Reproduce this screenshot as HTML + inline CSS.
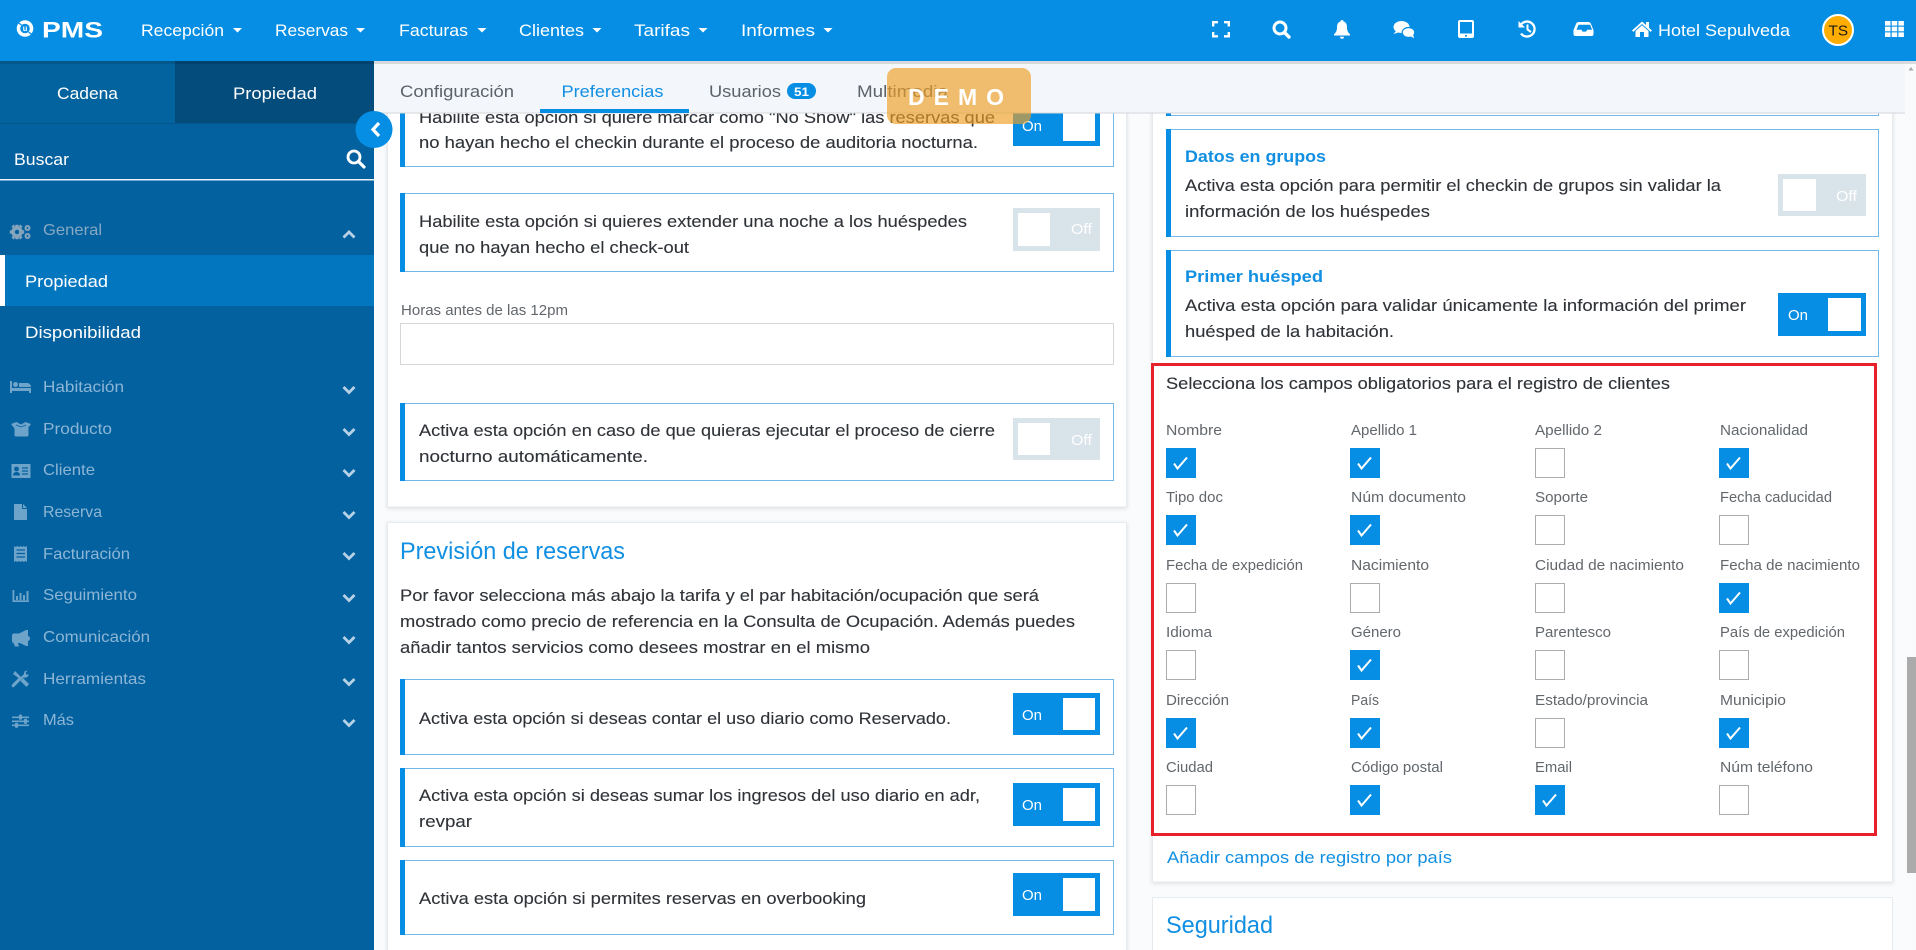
<!DOCTYPE html>
<html lang="es">
<head>
<meta charset="utf-8">
<title>PMS - Preferencias</title>
<style>
html,body{margin:0;padding:0;width:1916px;height:950px;overflow:hidden;background:#f9fbfd}
svg{display:block;position:absolute;left:0;top:0}
text{font-family:"Liberation Sans",sans-serif;white-space:pre}
.m{font-size:17px;fill:#fff}
.b{font-size:17px;fill:#2f3338;stroke:#2f3338;stroke-width:.12}
.l{font-size:14.5px;fill:#62676c}
.s{font-size:16px;fill:#8db6d6}
.h{font-size:24px;fill:#118fe2}
.t{font-size:17px;fill:#5c6268}
.o{font-size:14.5px;fill:#fff}
.bt{font-size:17px;font-weight:bold;fill:#118fe2}
</style>
</head>
<body>
<svg width="1916" height="950" viewBox="0 0 1916 950" xmlns="http://www.w3.org/2000/svg">
<defs>
<g id="cy"><rect width="30" height="30" fill="#058ee3"/><path d="M8 15.5L11.5 20.5L21 9.5" fill="none" stroke="#fff" stroke-width="2"/></g>
<g id="cn"><rect x=".5" y=".5" width="29" height="29" fill="#fff" stroke="#a9adb0"/></g>
<filter id="sh" x="-2%" y="-2%" width="104%" height="104%"><feDropShadow dx="0" dy="1" stdDeviation="2" flood-color="#000" flood-opacity=".12"/></filter>
</defs>

<!-- main background -->
<rect x="374" y="61" width="1542" height="889" fill="#f9fbfd"/>

<!-- left card 1 -->
<rect x="387.5" y="60" width="739" height="447" fill="#fff" stroke="#e6ebef" filter="url(#sh)"/>
<rect x="400.5" y="80.5" width="713" height="86" fill="#fff" stroke="#74b9ea"/><rect x="400" y="80" width="5" height="87" fill="#058ee3"/>
<text class="b" x="419" y="123" textLength="576" lengthAdjust="spacingAndGlyphs">Habilite esta opción si quiere marcar como "No Show" las reservas que</text>
<text class="b" x="419" y="148" textLength="559" lengthAdjust="spacingAndGlyphs">no hayan hecho el checkin durante el proceso de auditoria nocturna.</text>
<rect x="1013" y="100" width="87" height="46" fill="#058ee3"/><rect x="1063" y="100" width="32" height="41" fill="#fff"/>
<text class="o" x="1022" y="131" textLength="20" lengthAdjust="spacingAndGlyphs">On</text>

<rect x="400.5" y="193.5" width="713" height="78" fill="#fff" stroke="#74b9ea"/><rect x="400" y="193" width="5" height="79" fill="#058ee3"/>
<text class="b" x="419" y="227" textLength="548" lengthAdjust="spacingAndGlyphs">Habilite esta opción si quieres extender una noche a los huéspedes</text>
<text class="b" x="419" y="253" textLength="270" lengthAdjust="spacingAndGlyphs">que no hayan hecho el check-out</text>
<rect x="1013" y="208" width="87" height="43" fill="#d9e3ea"/><rect x="1018" y="213" width="32" height="33" fill="#fff"/>
<text class="o" x="1071" y="234" textLength="21" lengthAdjust="spacingAndGlyphs">Off</text>

<text class="l" x="401" y="315" textLength="167" lengthAdjust="spacingAndGlyphs">Horas antes de las 12pm</text>
<rect x="400.5" y="323.5" width="713" height="41" fill="#fff" stroke="#d5d8db"/>

<rect x="400.5" y="403.5" width="713" height="77" fill="#fff" stroke="#74b9ea"/><rect x="400" y="403" width="5" height="78" fill="#058ee3"/>
<text class="b" x="419" y="436" textLength="576" lengthAdjust="spacingAndGlyphs">Activa esta opción en caso de que quieras ejecutar el proceso de cierre</text>
<text class="b" x="419" y="462" textLength="229" lengthAdjust="spacingAndGlyphs">nocturno automáticamente.</text>
<rect x="1013" y="418" width="87" height="42" fill="#d9e3ea"/><rect x="1018" y="423" width="32" height="32" fill="#fff"/>
<text class="o" x="1071" y="445" textLength="21" lengthAdjust="spacingAndGlyphs">Off</text>

<!-- left card 2 -->
<rect x="387.5" y="522.5" width="739" height="440" fill="#fff" stroke="#e6ebef" filter="url(#sh)"/>
<text class="h" x="400" y="559" textLength="225" lengthAdjust="spacingAndGlyphs">Previsión de reservas</text>
<text class="b" x="400" y="601" textLength="639" lengthAdjust="spacingAndGlyphs">Por favor selecciona más abajo la tarifa y el par habitación/ocupación que será</text>
<text class="b" x="400" y="627" textLength="675" lengthAdjust="spacingAndGlyphs">mostrado como precio de referencia en la Consulta de Ocupación. Además puedes</text>
<text class="b" x="400" y="653" textLength="470" lengthAdjust="spacingAndGlyphs">añadir tantos servicios como desees mostrar en el mismo</text>

<rect x="400.5" y="679.5" width="713" height="75" fill="#fff" stroke="#74b9ea"/><rect x="400" y="679" width="5" height="76" fill="#058ee3"/>
<text class="b" x="419" y="724" textLength="532" lengthAdjust="spacingAndGlyphs">Activa esta opción si deseas contar el uso diario como Reservado.</text>
<rect x="1013" y="693" width="87" height="42" fill="#058ee3"/><rect x="1063" y="698" width="32" height="32" fill="#fff"/>
<text class="o" x="1022" y="720" textLength="20" lengthAdjust="spacingAndGlyphs">On</text>

<rect x="400.5" y="768.5" width="713" height="78" fill="#fff" stroke="#74b9ea"/><rect x="400" y="768" width="5" height="79" fill="#058ee3"/>
<text class="b" x="419" y="801" textLength="561" lengthAdjust="spacingAndGlyphs">Activa esta opción si deseas sumar los ingresos del uso diario en adr,</text>
<text class="b" x="419" y="827" textLength="53" lengthAdjust="spacingAndGlyphs">revpar</text>
<rect x="1013" y="783" width="87" height="43" fill="#058ee3"/><rect x="1063" y="788" width="32" height="33" fill="#fff"/>
<text class="o" x="1022" y="810" textLength="20" lengthAdjust="spacingAndGlyphs">On</text>

<rect x="400.5" y="860.5" width="713" height="74" fill="#fff" stroke="#74b9ea"/><rect x="400" y="860" width="5" height="75" fill="#058ee3"/>
<text class="b" x="419" y="904" textLength="447" lengthAdjust="spacingAndGlyphs">Activa esta opción si permites reservas en overbooking</text>
<rect x="1013" y="873" width="87" height="43" fill="#058ee3"/><rect x="1063" y="878" width="32" height="33" fill="#fff"/>
<text class="o" x="1022" y="900" textLength="20" lengthAdjust="spacingAndGlyphs">On</text>

<!-- right card 1 -->
<rect x="1152.5" y="60" width="740" height="822" fill="#fff" stroke="#e6ebef" filter="url(#sh)"/>
<rect x="1166.5" y="80.5" width="712" height="35" fill="#fff" stroke="#74b9ea"/><rect x="1166" y="80" width="5" height="36" fill="#058ee3"/>

<rect x="1166.5" y="129.5" width="712" height="107" fill="#fff" stroke="#74b9ea"/><rect x="1166" y="129" width="5" height="108" fill="#058ee3"/>
<text class="bt" x="1185" y="162" textLength="141" lengthAdjust="spacingAndGlyphs">Datos en grupos</text>
<text class="b" x="1185" y="191" textLength="536" lengthAdjust="spacingAndGlyphs">Activa esta opción para permitir el checkin de grupos sin validar la</text>
<text class="b" x="1185" y="217" textLength="245" lengthAdjust="spacingAndGlyphs">información de los huéspedes</text>
<rect x="1778" y="174" width="88" height="42" fill="#d9e3ea"/><rect x="1783" y="179" width="33" height="32" fill="#fff"/>
<text class="o" x="1836" y="201" textLength="21" lengthAdjust="spacingAndGlyphs">Off</text>

<rect x="1166.5" y="250.5" width="712" height="106" fill="#fff" stroke="#74b9ea"/><rect x="1166" y="250" width="5" height="107" fill="#058ee3"/>
<text class="bt" x="1185" y="282" textLength="138" lengthAdjust="spacingAndGlyphs">Primer huésped</text>
<text class="b" x="1185" y="311" textLength="561" lengthAdjust="spacingAndGlyphs">Activa esta opción para validar únicamente la información del primer</text>
<text class="b" x="1185" y="337" textLength="209" lengthAdjust="spacingAndGlyphs">huésped de la habitación.</text>
<rect x="1778" y="293" width="88" height="43" fill="#058ee3"/><rect x="1828" y="298" width="33" height="33" fill="#fff"/>
<text class="o" x="1788" y="320" textLength="20" lengthAdjust="spacingAndGlyphs">On</text>

<!-- red frame -->
<rect x="1152.5" y="364.5" width="723" height="470" fill="none" stroke="#e8202a" stroke-width="3"/>
<text class="b" x="1166" y="389" textLength="504" lengthAdjust="spacingAndGlyphs">Selecciona los campos obligatorios para el registro de clientes</text>

<text class="l" x="1166" y="435" textLength="56" lengthAdjust="spacingAndGlyphs">Nombre</text>
<text class="l" x="1351" y="435" textLength="66" lengthAdjust="spacingAndGlyphs">Apellido 1</text>
<text class="l" x="1535" y="435" textLength="67" lengthAdjust="spacingAndGlyphs">Apellido 2</text>
<text class="l" x="1720" y="435" textLength="88" lengthAdjust="spacingAndGlyphs">Nacionalidad</text>
<use href="#cy" x="1166" y="448"/><use href="#cy" x="1350" y="448"/><use href="#cn" x="1535" y="448"/><use href="#cy" x="1719" y="448"/>

<text class="l" x="1166" y="502" textLength="57" lengthAdjust="spacingAndGlyphs">Tipo doc</text>
<text class="l" x="1351" y="502" textLength="115" lengthAdjust="spacingAndGlyphs">Núm documento</text>
<text class="l" x="1535" y="502" textLength="53" lengthAdjust="spacingAndGlyphs">Soporte</text>
<text class="l" x="1720" y="502" textLength="112" lengthAdjust="spacingAndGlyphs">Fecha caducidad</text>
<use href="#cy" x="1166" y="515"/><use href="#cy" x="1350" y="515"/><use href="#cn" x="1535" y="515"/><use href="#cn" x="1719" y="515"/>

<text class="l" x="1166" y="570" textLength="137" lengthAdjust="spacingAndGlyphs">Fecha de expedición</text>
<text class="l" x="1351" y="570" textLength="78" lengthAdjust="spacingAndGlyphs">Nacimiento</text>
<text class="l" x="1535" y="570" textLength="149" lengthAdjust="spacingAndGlyphs">Ciudad de nacimiento</text>
<text class="l" x="1720" y="570" textLength="140" lengthAdjust="spacingAndGlyphs">Fecha de nacimiento</text>
<use href="#cn" x="1166" y="583"/><use href="#cn" x="1350" y="583"/><use href="#cn" x="1535" y="583"/><use href="#cy" x="1719" y="583"/>

<text class="l" x="1166" y="637" textLength="46" lengthAdjust="spacingAndGlyphs">Idioma</text>
<text class="l" x="1351" y="637" textLength="50" lengthAdjust="spacingAndGlyphs">Género</text>
<text class="l" x="1535" y="637" textLength="76" lengthAdjust="spacingAndGlyphs">Parentesco</text>
<text class="l" x="1720" y="637" textLength="125" lengthAdjust="spacingAndGlyphs">País de expedición</text>
<use href="#cn" x="1166" y="650"/><use href="#cy" x="1350" y="650"/><use href="#cn" x="1535" y="650"/><use href="#cn" x="1719" y="650"/>

<text class="l" x="1166" y="705" textLength="63" lengthAdjust="spacingAndGlyphs">Dirección</text>
<text class="l" x="1351" y="705" textLength="28" lengthAdjust="spacingAndGlyphs">País</text>
<text class="l" x="1535" y="705" textLength="113" lengthAdjust="spacingAndGlyphs">Estado/provincia</text>
<text class="l" x="1720" y="705" textLength="66" lengthAdjust="spacingAndGlyphs">Municipio</text>
<use href="#cy" x="1166" y="718"/><use href="#cy" x="1350" y="718"/><use href="#cn" x="1535" y="718"/><use href="#cy" x="1719" y="718"/>

<text class="l" x="1166" y="772" textLength="47" lengthAdjust="spacingAndGlyphs">Ciudad</text>
<text class="l" x="1351" y="772" textLength="92" lengthAdjust="spacingAndGlyphs">Código postal</text>
<text class="l" x="1535" y="772" textLength="37" lengthAdjust="spacingAndGlyphs">Email</text>
<text class="l" x="1720" y="772" textLength="93" lengthAdjust="spacingAndGlyphs">Núm teléfono</text>
<use href="#cn" x="1166" y="785"/><use href="#cy" x="1350" y="785"/><use href="#cy" x="1535" y="785"/><use href="#cn" x="1719" y="785"/>

<text x="1167" y="863" textLength="285" lengthAdjust="spacingAndGlyphs" style="font-size:17px;fill:#118fe2">Añadir campos de registro por país</text>

<!-- right card 2 -->
<rect x="1152.5" y="897.5" width="740" height="80" fill="#fff" stroke="#e6ebef"/>
<text class="h" x="1166" y="933" textLength="107" lengthAdjust="spacingAndGlyphs">Seguridad</text>

<!-- scrollbar -->
<rect x="1905" y="61" width="11" height="889" fill="#f8fafc"/>
<path d="M1908.5 70.5l2.5-3.5 2.5 3.5z" fill="#a8a8a8"/>
<rect x="1907" y="657" width="9" height="216" fill="#ababab"/>

<!-- tab strip -->
<rect x="374" y="61" width="1531" height="52" fill="#f3f7fb"/>
<rect x="374" y="112.500" width="1531" height="1" fill="#d3d6d9"/>
<text class="t" x="400" y="97" textLength="114" lengthAdjust="spacingAndGlyphs">Configuración</text>
<text x="561.500" y="97" textLength="102" lengthAdjust="spacingAndGlyphs" style="font-size:17px;fill:#118fe2">Preferencias</text>
<rect x="540" y="109" width="149" height="4" fill="#058ee3"/>
<text class="t" x="709" y="97" textLength="72" lengthAdjust="spacingAndGlyphs">Usuarios</text>
<rect x="787" y="83" width="29" height="16" rx="8" fill="#058ee3"/>
<text x="794" y="96" textLength="15" lengthAdjust="spacingAndGlyphs" style="font-size:12px;font-weight:bold;fill:#fff">51</text>
<text class="t" x="857" y="97" textLength="91" lengthAdjust="spacingAndGlyphs">Multimedia</text>

<!-- sidebar -->
<rect x="0" y="61" width="374" height="889" fill="#03619f"/>
<rect x="0" y="61" width="175" height="63" fill="#03639f"/>
<rect x="175" y="61" width="199" height="63" fill="#034c7c"/>
<rect x="0" y="123" width="374" height="1" fill="#03558c"/>
<text class="m" x="57" y="99" textLength="61" lengthAdjust="spacingAndGlyphs">Cadena</text>
<text class="m" x="233" y="99" textLength="84" lengthAdjust="spacingAndGlyphs">Propiedad</text>
<text class="m" x="14" y="165" textLength="55" lengthAdjust="spacingAndGlyphs">Buscar</text>
<circle cx="354" cy="157" r="6" fill="none" stroke="#fff" stroke-width="2.800"/><path d="M358.500 161.500L364 167" stroke="#fff" stroke-width="3.200" stroke-linecap="round"/>
<rect x="0" y="179" width="374" height="1.500" fill="#e8f1f7"/>

<rect x="0" y="255" width="374" height="51" fill="#0277c0"/>
<rect x="0" y="255" width="5" height="51" fill="#fff"/>
<text class="s" x="43" y="235" textLength="59" lengthAdjust="spacingAndGlyphs" style="fill:#87a9c3">General</text>
<text class="m" x="25" y="287" textLength="83" lengthAdjust="spacingAndGlyphs">Propiedad</text>
<text class="m" x="25" y="338" textLength="116" lengthAdjust="spacingAndGlyphs">Disponibilidad</text>
<text class="s" x="43" y="392" textLength="81" lengthAdjust="spacingAndGlyphs">Habitación</text>
<text class="s" x="43" y="434" textLength="69" lengthAdjust="spacingAndGlyphs">Producto</text>
<text class="s" x="43" y="475" textLength="52" lengthAdjust="spacingAndGlyphs">Cliente</text>
<text class="s" x="43" y="517" textLength="59" lengthAdjust="spacingAndGlyphs">Reserva</text>
<text class="s" x="43" y="559" textLength="87" lengthAdjust="spacingAndGlyphs">Facturación</text>
<text class="s" x="43" y="600" textLength="94" lengthAdjust="spacingAndGlyphs">Seguimiento</text>
<text class="s" x="43" y="642" textLength="107" lengthAdjust="spacingAndGlyphs">Comunicación</text>
<text class="s" x="43" y="684" textLength="103" lengthAdjust="spacingAndGlyphs">Herramientas</text>
<text class="s" x="43" y="725" textLength="31" lengthAdjust="spacingAndGlyphs">Más</text>

<!-- chevrons -->
<g fill="none" stroke="#b7d2e6" stroke-width="2.800">
<path d="M343.500 237.500l5.500-5.500 5.500 5.500"/>
<path d="M343.500 387l5.500 5.500 5.500-5.500"/>
<path d="M343.500 429l5.500 5.500 5.500-5.500"/>
<path d="M343.500 470l5.500 5.500 5.500-5.500"/>
<path d="M343.500 512l5.500 5.500 5.500-5.500"/>
<path d="M343.500 553l5.500 5.500 5.500-5.500"/>
<path d="M343.500 595l5.500 5.500 5.500-5.500"/>
<path d="M343.500 637l5.500 5.500 5.500-5.500"/>
<path d="M343.500 679l5.500 5.500 5.500-5.500"/>
<path d="M343.500 720l5.500 5.500 5.500-5.500"/>
</g>

<!-- sidebar icons -->
<g fill="#6ea3ca">
<g fill="#86a5bd">
<circle cx="17" cy="232" r="5.800"/><path d="M15.500 224.800h3l.4 2h-3.800zM15.500 239.200h3l.4-2h-3.800zM9.800 230.500v3l2 .4v-3.800zM24.200 230.500v3l-2 .4v-3.800zM11.500 226.600l2.100-2.100 1.500 1.500-2.200 2.100zM22.500 226.600l-2.100-2.100-1.500 1.500 2.200 2.100zM11.500 237.400l2.100 2.100 1.500-1.500-2.200-2.100zM22.500 237.400l-2.100 2.100-1.500-1.500 2.200-2.100z"/>
<circle cx="27.500" cy="228" r="2" fill="none" stroke="#86a5bd" stroke-width="2"/>
<circle cx="27.500" cy="236" r="2" fill="none" stroke="#86a5bd" stroke-width="2"/>
</g>
<circle cx="17" cy="232" r="2.200" fill="#03619f"/>
<path d="M10 381h2v7h19v5h-2v-2h-17v2h-2z"/><circle cx="15.500" cy="384.500" r="2.500"/><path d="M19 383h8a4 4 0 0 1 4 4h-12z"/>
<path d="M11 424l5.500-2 4.500 2.500 4.500-2.500 5.500 2-3 4 .5 0v7a1.500 1.500 0 0 1-1.500 1.500h-11a1.500 1.500 0 0 1-1.500-1.500v-6.500z"/>
<path d="M16 425l5 2 5-2" stroke="#03619f" stroke-width=".8" fill="none"/>
<path d="M11.500 464h19v14h-19z"/><circle cx="16.500" cy="469" r="2.400" fill="#03619f"/><path d="M13 475.500c0-2.500 1.500-3.500 3.500-3.500s3.500 1 3.500 3.500z" fill="#03619f"/><path d="M22 468h6M22 471h6M22 474h6" stroke="#03619f" stroke-width="1.200"/>
<path d="M14 504h8v5h5v11h-13zM23 504l4 4h-4z"/>
<path d="M14 546l1.600 1 1.600-1 1.600 1 1.600-1 1.800 1 1.600-1 1.600 1 1.600-1v16l-1.600-1-1.600 1-1.600-1-1.800 1-1.600-1-1.600 1-1.600-1-1.600 1z"/>
<path d="M16.500 550h8.500M16.500 553.500h8.500M16.500 557h8.500" stroke="#03619f" stroke-width="1.200"/>
<path d="M12.500 590h1.800v10.200h14.700v1.800h-16.500z"/><path d="M16 596h2v4h-2zM19.500 593h2v7h-2zM23 595h2v5h-2zM26.500 591h2v9h-2z"/>
<path d="M12 635.500a2 2 0 0 1 2-2h5l7-3.500h2v16h-2l-6-3h-2l1 3.500h-4l-1.500-3.500a2 2 0 0 1-1.500-2z"/><path d="M28 636a2.500 2.500 0 0 1 2 2.500 2.500 2.500 0 0 1-2 2.500z"/>
<path d="M13 674l2-3 6 6 3-3 0-.5c0-2 1.500-3 3.500-2.800l-2 2 1 2 2-.5c.2 2-1.500 3.500-3.500 3.500l-1.500-.2-9 9c-1 1-2 1-2.500 0-.5-.5-.5-1.500.5-2.500l6-6z"/><path d="M23 678l6 6-2.500 3-6-6z"/>
<path d="M12 716.500h17v1.600h-17zM12 720.500h17v1.600h-17zM12 724.500h17v1.600h-17z"/><rect x="19" y="714.500" width="3" height="5.200" rx="1"/><rect x="24" y="718.700" width="3" height="5.200" rx="1"/><rect x="15" y="722.700" width="3" height="5.200" rx="1"/>
</g>

<!-- collapse button -->
<circle cx="374" cy="129.500" r="18.500" fill="#058ee3"/>
<path d="M379 123l-6 6.500 6 6.500" fill="none" stroke="#fff" stroke-width="3.200"/>

<!-- header -->
<rect x="0" y="61" width="1916" height="3" fill="#000" opacity=".12"/>
<rect x="0" y="0" width="1916" height="61" fill="#058ee3"/>
<!-- logo -->
<circle cx="25" cy="28.500" r="8.300" fill="#fff"/>
<circle cx="25" cy="28.500" r="4.800" fill="#058ee3"/>
<path d="M18 22.500l3.500 2.500M32 34.500l-3.500-2.500" stroke="#058ee3" stroke-width="1.300"/>
<text x="22.700" y="31" textLength="4.600" lengthAdjust="spacingAndGlyphs" style="font-size:8px;font-weight:bold;fill:#fff">u</text>
<text x="42" y="37.500" textLength="61" lengthAdjust="spacingAndGlyphs" style="font-size:22.500px;font-weight:bold;fill:#fff">PMS</text>
<!-- menu -->
<text class="m" x="141" y="36" textLength="83" lengthAdjust="spacingAndGlyphs">Recepción</text>
<text class="m" x="275" y="36" textLength="73" lengthAdjust="spacingAndGlyphs">Reservas</text>
<text class="m" x="399" y="36" textLength="69" lengthAdjust="spacingAndGlyphs">Facturas</text>
<text class="m" x="519" y="36" textLength="65" lengthAdjust="spacingAndGlyphs">Clientes</text>
<text class="m" x="634" y="36" textLength="56" lengthAdjust="spacingAndGlyphs">Tarifas</text>
<text class="m" x="741" y="36" textLength="74" lengthAdjust="spacingAndGlyphs">Informes</text>
<g fill="#fff">
<path d="M233 28h9l-4.500 4.500z"/><path d="M356 28h9l-4.500 4.500z"/><path d="M477.500 28h9l-4.500 4.500z"/><path d="M592.500 28h9l-4.500 4.500z"/><path d="M698.500 28h9l-4.500 4.500z"/><path d="M823.500 28h9l-4.500 4.500z"/>
</g>
<!-- right icons -->
<g fill="none" stroke="#fff">
<path d="M1213.200 26.500v-4.300h4.800M1224 22.200h4.800v4.300M1228.800 32v4.300h-4.800M1218 36.300h-4.800V32" stroke-width="2.400"/>
<circle cx="1280" cy="28" r="6" stroke-width="3"/><path d="M1284.500 32.500L1289 37" stroke-width="3.400" stroke-linecap="round"/>
<path d="M1521.500 24A7.500 7.500 0 1 1 1521 33.500" stroke-width="2.300"/>
<path d="M1527.500 24.500v5l3.500 2.500" stroke-width="2"/>
</g>
<g fill="#fff">
<path d="M1342 20c1 0 1.500.7 1.500 1.500 3 .8 3.500 3.500 3.500 6 0 3 1 5 3 6.800v1.200h-16v-1.200c2-1.800 3-3.800 3-6.800 0-2.500.5-5.200 3.500-6 0-.8.500-1.500 1.500-1.500z"/><path d="M1340 36.800h4a2 2 0 0 1-4 0z"/>
<ellipse cx="1401.500" cy="27" rx="8" ry="6"/><path d="M1396 31l-2.500 3 5-1.500z"/>
<ellipse cx="1408.500" cy="32.500" rx="6.300" ry="5" stroke="#058ee3" stroke-width="1.200"/><path d="M1411 36.500l3 1.800-.8-3.300z"/>
<path fill-rule="evenodd" d="M1460 20h12a2 2 0 0 1 2 2v14a2 2 0 0 1-2 2h-12a2 2 0 0 1-2-2v-14a2 2 0 0 1 2-2zM1460 22v11.500h12v-11.500z"/>
<circle cx="1466" cy="35.800" r="1" fill="#058ee3"/>
<path d="M1518.500 21v6.500h6.500z"/>
<path fill-rule="evenodd" d="M1579 22h9c1.500 0 2.500.8 3 2l2.500 6v4a2 2 0 0 1-2 2h-16a2 2 0 0 1-2-2v-4l2.500-6c.5-1.200 1.500-2 3-2zM1578.500 24.800l-2 5h5l1 1.800h3.600l1-1.800h5l-2-5z"/>
<path d="M1632 30.500l10-9 4 3.500v-3h3v5.700l3 2.800-1.300 1.400-8.700-7.900-8.700 7.900z"/>
<path d="M1635.500 31l6.500-5.800 6.500 5.800v6h-4.500v-5h-4v5h-4.500z"/>
<rect x="1885" y="21" width="5.500" height="4.600"/><rect x="1891.700" y="21" width="5.500" height="4.600"/><rect x="1898.400" y="21" width="5.500" height="4.600"/>
<rect x="1885" y="26.700" width="5.500" height="4.600"/><rect x="1891.700" y="26.700" width="5.500" height="4.600"/><rect x="1898.400" y="26.700" width="5.500" height="4.600"/>
<rect x="1885" y="32.400" width="5.500" height="4.600"/><rect x="1891.700" y="32.400" width="5.500" height="4.600"/><rect x="1898.400" y="32.400" width="5.500" height="4.600"/>
</g>
<text class="m" x="1658" y="36" textLength="132" lengthAdjust="spacingAndGlyphs">Hotel Sepulveda</text>
<circle cx="1838" cy="30" r="15" fill="#ffad00" stroke="#fff" stroke-width="2"/>
<text x="1828.500" y="35.500" textLength="19.500" lengthAdjust="spacingAndGlyphs" style="font-size:15px;fill:#1c1c1c">TS</text>

<!-- DEMO ribbon -->
<rect x="887" y="68" width="144" height="56" rx="9" fill="#ee9f26" fill-opacity=".66"/>
<text x="908" y="105" textLength="96" lengthAdjust="spacing" style="font-size:23px;font-weight:bold;fill:#fff">D E M O</text>
</svg>
</body>
</html>
